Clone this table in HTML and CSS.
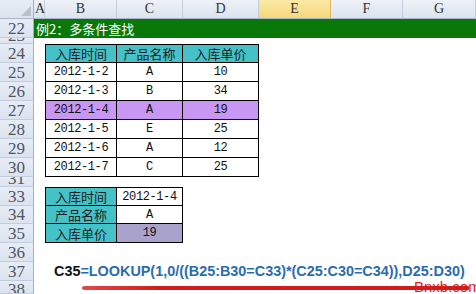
FILE: index.html
```html
<!DOCTYPE html>
<html>
<head>
<meta charset="utf-8">
<link rel="stylesheet" href="styles.css">
</head>
<body>
<div class="sheet">
  <div class="row hdr">
    <div class="rh corner"><svg width="10" height="10" viewBox="0 0 10 10"><polygon points="10,0 10,10 0,10" fill="#b9c0ca"/></svg></div>
    <div class="ch ca">A</div>
    <div class="ch cb">B</div>
    <div class="ch cc">C</div>
    <div class="ch cd">D</div>
    <div class="ch ce sel">E</div>
    <div class="ch cf">F</div>
    <div class="ch cg">G</div>
  </div>
  <div class="row r19"><div class="rh">22</div><div class="title">例2：多条件查找</div></div>
  <div class="row r23"><div class="rh cut">23</div></div>
  <div class="row r19"><div class="rh">24</div><div class="ca"></div><div class="c cb first top hd">入库时间</div><div class="c cc top hd">产品名称</div><div class="c cd top hd">入库单价</div></div>
  <div class="row r19"><div class="rh">25</div><div class="ca"></div><div class="c cb first num">2012-1-2</div><div class="c cc num">A</div><div class="c cd num">10</div></div>
  <div class="row r19"><div class="rh">26</div><div class="ca"></div><div class="c cb first num">2012-1-3</div><div class="c cc num">B</div><div class="c cd num">34</div></div>
  <div class="row r19"><div class="rh">27</div><div class="ca"></div><div class="c cb first num hl">2012-1-4</div><div class="c cc num hl">A</div><div class="c cd num hl">19</div></div>
  <div class="row r19"><div class="rh">28</div><div class="ca"></div><div class="c cb first num">2012-1-5</div><div class="c cc num">E</div><div class="c cd num">25</div></div>
  <div class="row r19"><div class="rh">29</div><div class="ca"></div><div class="c cb first num">2012-1-6</div><div class="c cc num">A</div><div class="c cd num">12</div></div>
  <div class="row r19"><div class="rh">30</div><div class="ca"></div><div class="c cb first num">2012-1-7</div><div class="c cc num">C</div><div class="c cd num">25</div></div>
  <div class="row r31"><div class="rh cut">31</div></div>
  <div class="row r19"><div class="rh">33</div><div class="ca"></div><div class="c cb first top hd">入库时间</div><div class="c cc top num">2012-1-4</div></div>
  <div class="row r18"><div class="rh">34</div><div class="ca"></div><div class="c cb first hd">产品名称</div><div class="c cc num">A</div></div>
  <div class="row r19"><div class="rh">35</div><div class="ca"></div><div class="c cb first hd">入库单价</div><div class="c cc num res">19</div></div>
  <div class="row r19"><div class="rh">36</div></div>
  <div class="row r19"><div class="rh">37</div><div class="formula"><b class="ref">C35</b>=LOOKUP(1,0/((B25:B30=C33)*(C25:C30=C34)),D25:D30)</div></div>
  <div class="row r13"><div class="rh cut top">38</div><div class="mark"><div class="redline"></div></div></div>
  <div class="wm">Bnxb.com</div>
</div>
</body>
</html>
```
FILE: styles.css
```css
html, body {
  margin: 0;
  padding: 0;
  background: #fff;
  overflow: hidden;
}
.sheet {
  position: relative;
  width: 476px;
  height: 294px;
  overflow: hidden;
  background: #fff;
}
.row {
  display: flex;
  height: 19px;
}
.r18 { height: 18px; }
.r23 { height: 6px; }
.r31 { height: 10px; }
.r13 { height: 13px; }
.rh {
  box-sizing: border-box;
  width: 34px;
  flex: none;
  height: 100%;
  background: linear-gradient(#e7edf6, #dbe3ef);
  border-right: 1px solid #9eafc6;
  border-bottom: 1px solid #c2cedf;
  font-family: "Liberation Serif", serif;
  font-size: 17px;
  color: #505560;
  display: flex;
  align-items: center;
  justify-content: center;
  overflow: hidden;
  line-height: 1;
}
.rh.cut { align-items: flex-end; line-height: 0.75; }
.rh.cut.top { align-items: flex-start; padding-top: 3px; }
.hdr { height: 19px; }
.corner {
  align-items: flex-end;
  justify-content: flex-end;
  padding: 0 2px 2px 0;
  border-bottom: 1px solid #a9b6c8;
}
.ch {
  box-sizing: border-box;
  height: 19px;
  background: linear-gradient(#eef2f8, #dbe3ee);
  border-right: 1px solid #c3ccd9;
  border-bottom: 1px solid #a9b6c8;
  font-family: "Liberation Serif", serif;
  font-size: 14px;
  color: #333;
  display: flex;
  align-items: center;
  justify-content: center;
  flex: none;
}
.ch.sel {
  background: linear-gradient(#fbe9a6, #f7d77c);
  border-right-color: #d9b860;
}
.ca { width: 11px; flex: none; }
.cb { width: 72px; flex: none; }
.cc { width: 66px; flex: none; }
.cd { width: 76px; flex: none; }
.ce { width: 72px; }
.cf { width: 72px; }
.cg { width: 73px; }
.ch.ca { justify-content: flex-start; padding-left: 1px; }
.title {
  flex: 1;
  background: #087808;
  color: #fff;
  font-family: "Noto Sans CJK SC", sans-serif;
  font-size: 13px;
  line-height: 19px;
  padding-left: 2px;
}
.c {
  box-sizing: border-box;
  height: 100%;
  border-right: 1px solid #000;
  border-bottom: 1px solid #000;
  display: flex;
  align-items: center;
  justify-content: center;
  color: #111;
}
.c.first { border-left: 1px solid #000; }
.c.top { border-top: 1px solid #000; }
.hd {
  background: #45c1c8;
  font-family: "Noto Sans CJK SC", sans-serif;
  font-size: 13px;
  color: #222;
}
.num {
  font-family: "Liberation Mono", monospace;
  font-size: 12px;
  letter-spacing: -0.4px;
}
.hl { background: #c797f3; }
.res { background: #a9a2cc; }
.formula {
  padding-left: 20px;
  font-family: "Liberation Sans", Arial, sans-serif;
  font-weight: bold;
  font-size: 14.4px;
  line-height: 19px;
  color: #2a6cb0;
  white-space: nowrap;
}
.formula .ref { color: #111; }
.mark {
  flex: 1;
  padding: 5px 0 0 48px;
}
.redline {
  width: 387px;
  height: 4px;
  background: linear-gradient(90deg, #e04a4a, #cf1d1d 20%, #cf1d1d);
  border-radius: 3px 1px 1px 3px;
}
.wm {
  position: absolute;
  left: 414px;
  top: 278px;
  font-family: "Liberation Sans", Arial, sans-serif;
  font-size: 15px;
  color: #e01818;
}
```
